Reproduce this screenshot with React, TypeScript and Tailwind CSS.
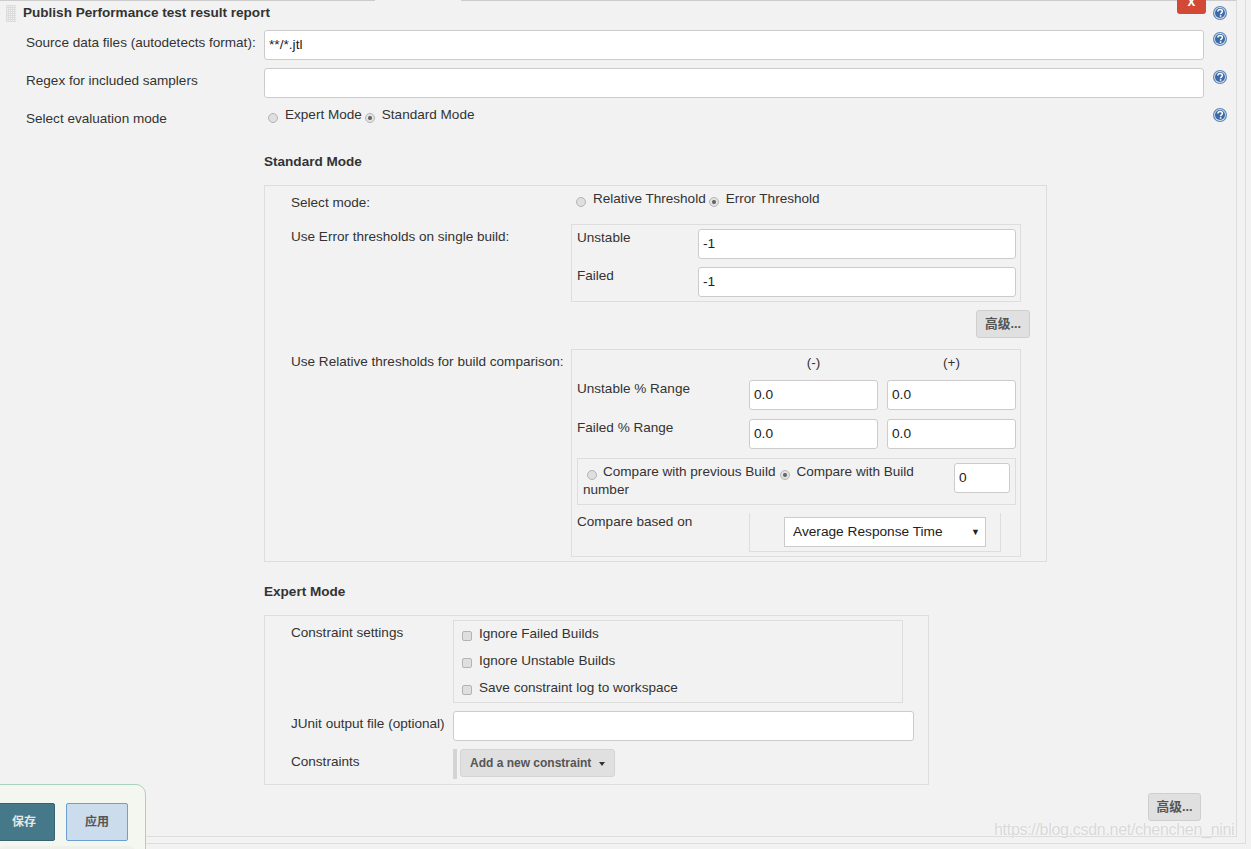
import type { ReactNode } from 'react';

function HelpIcon({ className = '' }: { className?: string }) {
  return (
    <svg width="14" height="14" viewBox="0 0 14 14" className={`shrink-0 ${className}`}>
      <circle cx="7" cy="7" r="7" fill="#5d85b8" />
      <circle cx="7" cy="7" r="5.9" fill="#d5e0ee" />
      <circle cx="7" cy="7" r="5" fill="#3c6aa5" />
      <path d="M4.8 5.5C5 4.1 5.9 3.4 7.1 3.4c1.4 0 2.3.8 2.3 1.9 0 1.6-1.8 1.6-1.8 3" fill="none" stroke="#fff" strokeWidth="1.5" />
      <rect x="6.8" y="9.2" width="1.6" height="1.6" fill="#fff" />
    </svg>
  );
}

function Radio({ checked = false, className = '' }: { checked?: boolean; className?: string }) {
  return (
    <input
      type="radio"
      readOnly
      checked={checked}
      className={`h-[10px] w-[10px] shrink-0 appearance-none rounded-full border border-[#b4b4b4] ${
        checked ? 'bg-[radial-gradient(circle,#666_0,#666_1.5px,#e2e2e2_2.5px)]' : 'bg-[#dfdfdf]'
      } ${className}`}
    />
  );
}

function TextInput({ value = '', className = '' }: { value?: string; className?: string }) {
  return (
    <input
      type="text"
      readOnly
      value={value}
      className={`h-[30px] rounded-[3px] border border-[#cccccc] bg-white pr-[5px] pb-[2px] pl-[4px] text-[13.7px] text-[#222] outline-none ${className}`}
    />
  );
}

function AdvancedButton({ className = '' }: { className?: string }) {
  return (
    <button
      type="button"
      className={`h-[28px] rounded-[3px] border border-[#cfcfcf] bg-[#e0e0e0] text-[12.7px] font-bold text-[#555] ${className}`}
    >
      高级...
    </button>
  );
}

function Check({ label }: { label: string }) {
  return (
    <label className="flex h-[27px] pl-[8px]">
      <input
        type="checkbox"
        readOnly
        className="mt-[8px] mr-[7px] h-[10px] w-[10px] appearance-none rounded-[2px] border border-[#b4b4b4] bg-[#dfdfdf]"
      />
      <span>{label}</span>
    </label>
  );
}

function RadioPair({ first, second, className = '' }: { first: string; second: string; className?: string }) {
  return (
    <div className={`flex ${className}`}>
      <Radio className="mt-[9px] mr-[7px]" />
      <span>{first}</span>
      <Radio checked className="mt-[9px] mr-[7px] ml-[3px]" />
      <span>{second}</span>
    </div>
  );
}

function SectionTitle({ children, className = '' }: { children: ReactNode; className?: string }) {
  return <h3 className={`ml-[264px] font-bold text-[#333] ${className}`}>{children}</h3>;
}

export default function App() {
  return (
    <div className="relative h-[849px] w-full overflow-hidden bg-[#f2f2f2] font-['Liberation_Sans','Noto_Sans_CJK_SC',sans-serif] text-[13.55px] leading-[22px] whitespace-nowrap text-[#333]">
      <div className="h-[844px] w-[1246px] border-r border-b border-[#dddddd]">
        <div className="h-[837px] w-[1237px] border-t border-r border-b border-t-[#cccccc] border-r-[#dddddd] border-b-[#dddddd]">
          {/* header */}
          <div className="flex h-[29px] pl-[6px]">
            <div className="mt-[4px] h-[17px] w-[10px] bg-[linear-gradient(to_right,#dcdcdc_1px,transparent_1px),linear-gradient(to_bottom,#dcdcdc_1px,transparent_1px)] bg-[size:2px_2px]" />
            <div className="mt-px ml-[7px] font-bold">Publish Performance test result report</div>
            <div className="-mt-px ml-auto h-[14px] w-[29px] overflow-hidden rounded-b-[3px] bg-[#d24a35] text-center text-[14px] leading-[3px] font-bold text-white">
              x
            </div>
            <HelpIcon className="mt-[5px] mr-[9px] ml-[7px]" />
          </div>

          {/* top fields */}
          <div className="flex h-[38px]">
            <label className="w-[264px] pt-[2px] pl-[26px]">Source data files (autodetects format):</label>
            <TextInput value="**/*.jtl" className="w-[940px]" />
            <HelpIcon className="mt-[2px] ml-[9px]" />
          </div>
          <div className="flex h-[36px]">
            <label className="w-[264px] pt-[2px] pl-[26px]">Regex for included samplers</label>
            <TextInput className="w-[940px]" />
            <HelpIcon className="mt-[2px] ml-[9px]" />
          </div>
          <div className="flex h-[30px]">
            <label className="w-[268px] pt-[4px] pl-[26px]">Select evaluation mode</label>
            <RadioPair first="Expert Mode" second="Standard Mode" className="w-[945px]" />
            <HelpIcon className="mt-[4px]" />
          </div>

          {/* standard mode */}
          <SectionTitle className="mt-[17px]">Standard Mode</SectionTitle>
          <div className="mt-[12px] ml-[264px] h-[377px] w-[783px] border border-[#dddddd] pt-[2px]">
            <div className="flex h-[36px]">
              <label className="w-[306px] pt-[4px] pl-[26px]">Select mode:</label>
              <RadioPair first="Relative Threshold" second="Error Threshold" className="pl-[5px]" />
            </div>

            <div className="flex">
              <label className="w-[306px] pt-[2px] pl-[26px]">Use Error thresholds on single build:</label>
              <div className="h-[78px] w-[450px] border border-[#dddddd] pt-[2px]">
                <div className="flex h-[38px] pl-[5px]">
                  <span className="w-[121px]">Unstable</span>
                  <TextInput value="-1" className="mt-[2px] w-[318px]" />
                </div>
                <div className="flex h-[36px] pl-[5px]">
                  <span className="w-[121px]">Failed</span>
                  <TextInput value="-1" className="mt-[2px] w-[318px]" />
                </div>
              </div>
            </div>

            <div className="mt-[8px] flex justify-end pr-[16px]">
              <AdvancedButton className="w-[54px]" />
            </div>

            <div className="mt-[11px] flex">
              <label className="w-[306px] pt-[2px] pl-[26px]">Use Relative thresholds for build comparison:</label>
              <div className="h-[208px] w-[450px] border border-[#dddddd] pt-[2px]">
                <div className="flex h-[26px] pl-[177px]">
                  <span className="w-[129px] text-center">(-)</span>
                  <span className="ml-[9px] w-[129px] text-center">(+)</span>
                </div>
                <div className="flex h-[39px] pl-[5px]">
                  <span className="w-[172px]">Unstable % Range</span>
                  <TextInput value="0.0" className="mt-[2px] w-[129px]" />
                  <TextInput value="0.0" className="mt-[2px] ml-[9px] w-[129px]" />
                </div>
                <div className="flex h-[32px] pl-[5px]">
                  <span className="w-[172px]">Failed % Range</span>
                  <TextInput value="0.0" className="mt-[2px] w-[129px]" />
                  <TextInput value="0.0" className="mt-[2px] ml-[9px] w-[129px]" />
                </div>

                <div className="mt-[9px] ml-[5px] flex h-[47px] w-[439px] border border-[#dddddd] pt-[4px] pl-[5px]">
                  <div className="w-[366px] leading-[18px] whitespace-normal">
                    <Radio className="mr-[6px] ml-[4px] align-[-4px]" />
                    Compare with previous Build
                    <Radio checked className="mr-[6px] ml-[5px] align-[-4px]" />
                    Compare with Build number
                  </div>
                  <TextInput value="0" className="ml-[5px] w-[56px]" />
                </div>

                <div className="mt-[6px] flex pl-[5px]">
                  <span className="w-[172px]">Compare based on</span>
                  <div className="mt-[2px] h-[39px] w-[252px] border-x border-b border-[#dddddd] pt-[4px] pl-[34px]">
                    <div className="flex h-[30px] w-[202px] items-center justify-between border border-[#cccccc] bg-white pr-[5px] pl-[8px] text-[13.7px] text-[#222]">
                      <span>Average Response Time</span>
                      <span className="text-[9px]">▼</span>
                    </div>
                  </div>
                </div>
              </div>
            </div>
          </div>

          {/* expert mode */}
          <SectionTitle className="mt-[19px]">Expert Mode</SectionTitle>
          <div className="mt-[12px] ml-[264px] h-[170px] w-[665px] border border-[#dddddd] pt-[4px]">
            <div className="flex">
              <label className="w-[188px] pt-[2px] pl-[26px]">Constraint settings</label>
              <div className="h-[83px] w-[450px] border border-[#dddddd] pt-[2px]">
                <Check label="Ignore Failed Builds" />
                <Check label="Ignore Unstable Builds" />
                <Check label="Save constraint log to workspace" />
              </div>
            </div>
            <div className="mt-[8px] flex">
              <label className="w-[188px] pt-[2px] pl-[26px]">JUnit output file (optional)</label>
              <TextInput className="w-[461px]" />
            </div>
            <div className="mt-[8px] flex">
              <label className="w-[188px] pt-[2px] pl-[26px]">Constraints</label>
              <div className="h-[30px] w-[4px] bg-[#d4d4d4]" />
              <button
                type="button"
                className="ml-[3px] flex h-[28px] w-[155px] items-center rounded-[3px] border border-[#d4d4d4] bg-[#e0e0e0] pl-[9px] text-[12px] font-bold text-[#555]"
              >
                Add a new constraint
                <span className="mt-px ml-[8px] h-0 w-0 border-x-[3.5px] border-t-[4px] border-x-transparent border-t-[#333]" />
              </button>
            </div>
          </div>

          <div className="mt-[8px] flex justify-end pr-[35px]">
            <AdvancedButton className="w-[53px]" />
          </div>
        </div>
      </div>

      {/* lighter piece of the top rule */}
      <div className="absolute top-0 left-[375px] h-px w-[86px] bg-[#f2f2f2]" />

      {/* sticky save bar */}
      <div className="absolute top-[784px] -left-px flex h-[70px] w-[147px] gap-[11px] rounded-tr-[10px] border border-[#a9d2ba] bg-[#f4f7f0] pt-[18px]">
        <button type="button" className="-ml-[7px] h-[38px] w-[62px] shrink-0 rounded-[2px] border border-[#38626f] bg-[#457889] text-[12px] font-bold text-[#e6e6e6]">
          保存
        </button>
        <button type="button" className="h-[38px] w-[62px] shrink-0 rounded-[2px] border border-[#6d9fd3] bg-[#cbdcec] text-[12px] font-bold text-[#555]">
          应用
        </button>
        <div className="absolute top-[61px] left-0 h-[10px] w-[134px] rounded-[4px] bg-[#eef0e9]" />
      </div>

      {/* watermark */}
      <div className="pointer-events-none absolute top-[820px] left-[994px] text-[16px] leading-5 tracking-[-0.3px] text-[#d8d8d8] [text-shadow:0_0_2px_#ffffff]">
        https://blog.csdn.net/chenchen_nini
      </div>
    </div>
  );
}
